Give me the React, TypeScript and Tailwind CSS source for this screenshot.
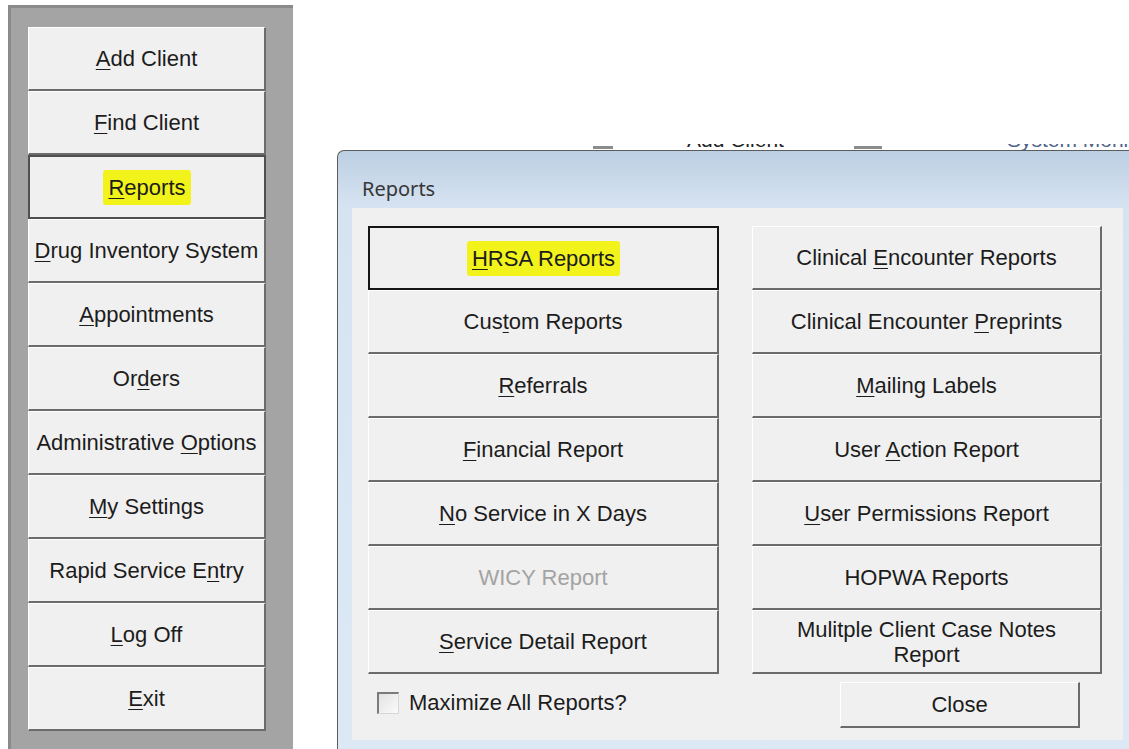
import React from 'react'

type Item = {
  text: string
  key?: number
  state?: 'pressed' | 'default' | 'disabled'
  marked?: boolean
}

const menu: Item[] = [
  { text: 'Add Client', key: 0 },
  { text: 'Find Client', key: 0 },
  { text: 'Reports', key: 0, state: 'pressed', marked: true },
  { text: 'Drug Inventory System', key: 0 },
  { text: 'Appointments', key: 0 },
  { text: 'Orders', key: 2 },
  { text: 'Administrative Options', key: 15 },
  { text: 'My Settings', key: 0 },
  { text: 'Rapid Service Entry', key: 15 },
  { text: 'Log Off', key: 0 },
  { text: 'Exit', key: 0 },
]

const leftReports: Item[] = [
  { text: 'HRSA Reports', key: 0, state: 'default', marked: true },
  { text: 'Custom Reports', key: 3 },
  { text: 'Referrals', key: 0 },
  { text: 'Financial Report', key: 0 },
  { text: 'No Service in X Days', key: 0 },
  { text: 'WICY Report', state: 'disabled' },
  { text: 'Service Detail Report', key: 0 },
]

const rightReports: Item[] = [
  { text: 'Clinical Encounter Reports', key: 9 },
  { text: 'Clinical Encounter Preprints', key: 19 },
  { text: 'Mailing Labels', key: 0 },
  { text: 'User Action Report', key: 5 },
  { text: 'User Permissions Report', key: 0 },
  { text: 'HOPWA Reports' },
  { text: 'Mulitple Client Case Notes\nReport' },
]

// access key letter gets underlined, like a WinForms mnemonic
function Caption({ text, k }: { text: string; k?: number }) {
  const lines = text.split('\n')
  if (k === undefined) {
    return (
      <>
        {lines.map((l, i) => (
          <span key={i} className="block">
            {l}
          </span>
        ))}
      </>
    )
  }
  return (
    <>
      {text.slice(0, k)}
      <span className="underline decoration-1 underline-offset-[3px]">{text[k]}</span>
      {text.slice(k + 1)}
    </>
  )
}

const raised =
  'bg-[#f0f0f0] border-t border-l border-t-white border-l-white border-b-2 border-r-2 border-b-[#6b6b6b] border-r-[#6b6b6b]'

function WinButton({ item, className }: { item: Item; className: string }) {
  let frame = raised
  if (item.state === 'pressed') frame = 'bg-[#f0f0f0] border-2 border-[#4f4f4f]'
  if (item.state === 'default') frame = 'bg-[#f0f0f0] border-2 border-[#151515]'
  const color = item.state === 'disabled' ? 'text-[#a3a3a3]' : 'text-[#1c1c1c]'

  return (
    <div className={`${className} ${frame} ${color} flex flex-col items-center justify-center text-center leading-[25px]`}>
      {item.marked ? (
        <span className="bg-[#f3f31c] px-[5px] py-[5px] rounded-[3px]">
          <Caption text={item.text} k={item.key} />
        </span>
      ) : (
        <span>
          <Caption text={item.text} k={item.key} />
        </span>
      )}
    </div>
  )
}

export default function App() {
  return (
    <div className="w-[1129px] h-[749px] bg-white flex overflow-hidden font-[Liberation_Sans,Arial,sans-serif] text-[22px]">
      {/* main menu strip */}
      <div className="ml-[8px] mt-[5px] w-[285px] h-[760px] shrink-0 bg-[#a4a4a4] border-t-[3px] border-l-[3px] border-[#8a8a8a] pl-[17px] pt-[19px] flex flex-col">
        {menu.map((m) => (
          <WinButton key={m.text} item={m} className="w-[238px] h-[64px]" />
        ))}
      </div>

      <div className="flex-1 flex flex-col min-w-0">
        <div className="h-[144px] shrink-0" />

        {/* bits of the window underneath, showing above the dialog */}
        <div className="h-[6px] shrink-0 flex items-end overflow-hidden text-[#222] text-[21px] leading-none">
          <div className="w-[300px] shrink-0" />
          <div className="w-[20px] h-[3px] bg-[#8c8c8c] shrink-0 mb-[1px]" />
          <div className="w-[74px] shrink-0" />
          <span className="shrink-0 whitespace-nowrap">Add Client</span>
          <div className="w-[70px] shrink-0" />
          <div className="w-[28px] h-[3px] bg-[#8c8c8c] shrink-0 mb-[1px]" />
          <div className="w-[125px] shrink-0" />
          <span className="shrink-0 whitespace-nowrap text-[#4d6189]">System Monitor</span>
        </div>

        {/* Reports dialog */}
        <div className="ml-[44px] flex-1 flex flex-col rounded-tl-[7px] border-t border-l border-[#5c5c5c] bg-[linear-gradient(to_bottom,#bccfe3_0px,#d6e3f1_56px,#dce9f5_100%)]">
          <div className="h-[57px] shrink-0 pl-[24px] pt-[24px] font-[Noto_Sans,Open_Sans,sans-serif] text-[20px] leading-[28px] text-[#363636]">
            Reports
          </div>
          <div className="flex">
            <div className="w-[14px] shrink-0" />
            <div className="w-[771px] h-[532px] shrink-0 bg-[#f0f0f0] pl-[16px] pt-[18px]">
              <div className="grid grid-cols-[351px_350px] gap-x-[33px]">
                <div className="flex flex-col">
                  {leftReports.map((r) => (
                    <WinButton key={r.text} item={r} className="h-[64px]" />
                  ))}
                </div>
                <div className="flex flex-col">
                  {rightReports.map((r) => (
                    <WinButton key={r.text} item={r} className="h-[64px]" />
                  ))}
                </div>

                <div className="mt-[6px] h-[46px] flex items-center pl-[9px] text-[#1c1c1c]">
                  <div className="w-[22px] h-[22px] border-t-2 border-l-2 border-[#7b7b7b] border-r border-b border-r-[#d6d6d6] border-b-[#d6d6d6] bg-[linear-gradient(135deg,#e2e2e2,#fbfbfb)]" />
                  <span className="ml-[10px] leading-[24px]">Maximize All Reports?</span>
                </div>
                <div className="pl-[88px] pt-[8px]">
                  <WinButton item={{ text: 'Close' }} className="w-[240px] h-[46px]" />
                </div>
              </div>
            </div>
          </div>
        </div>
      </div>
    </div>
  )
}
